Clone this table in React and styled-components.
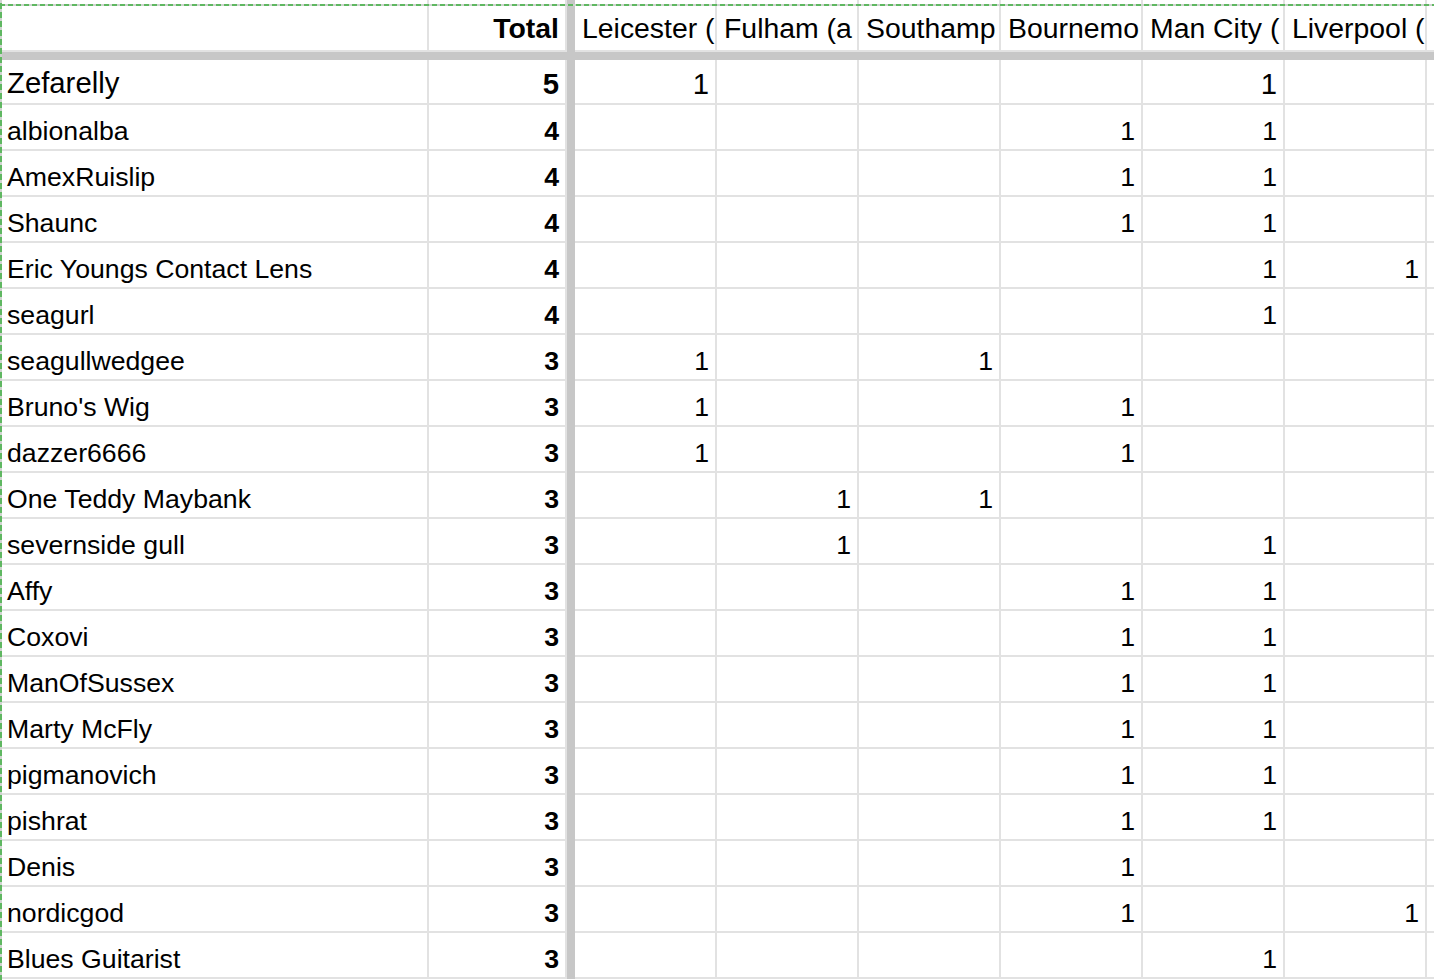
import React from "react";
import styled, { createGlobalStyle } from "styled-components";

// header labels as far as the narrow columns let them show
const teams = [
  "Leicester (",
  "Fulham (a",
  "Southamp",
  "Bournemo",
  "Man City (",
  "Liverpool (",
  "",
];

const rows = [
  { name: "Zefarelly", total: 5, picks: [0, 4] },
  { name: "albionalba", total: 4, picks: [3, 4] },
  { name: "AmexRuislip", total: 4, picks: [3, 4] },
  { name: "Shaunc", total: 4, picks: [3, 4] },
  { name: "Eric Youngs Contact Lens", total: 4, picks: [4, 5] },
  { name: "seagurl", total: 4, picks: [4] },
  { name: "seagullwedgee", total: 3, picks: [0, 2] },
  { name: "Bruno's Wig", total: 3, picks: [0, 3] },
  { name: "dazzer6666", total: 3, picks: [0, 3] },
  { name: "One Teddy Maybank", total: 3, picks: [1, 2] },
  { name: "severnside gull", total: 3, picks: [1, 4] },
  { name: "Affy", total: 3, picks: [3, 4] },
  { name: "Coxovi", total: 3, picks: [3, 4] },
  { name: "ManOfSussex", total: 3, picks: [3, 4] },
  { name: "Marty McFly", total: 3, picks: [3, 4] },
  { name: "pigmanovich", total: 3, picks: [3, 4] },
  { name: "pishrat", total: 3, picks: [3, 4] },
  { name: "Denis", total: 3, picks: [3] },
  { name: "nordicgod", total: 3, picks: [3, 5] },
  { name: "Blues Guitarist", total: 3, picks: [4] },
];

const GlobalStyle = createGlobalStyle`
  html, body {
    margin: 0;
    padding: 0;
    background: #ffffff;
  }
  body {
    font-family: "Liberation Sans", Arial, Helvetica, sans-serif;
    color: #000000;
  }
`;

const Page = styled.div`
  position: relative;
  width: 1434px;
  height: 980px;
  overflow: hidden;
  background: #ffffff;

  /* copy marquee (marching ants) */
  &::before {
    content: "";
    position: absolute;
    top: 4px;
    left: 0;
    right: 0;
    height: 2px;
    background: repeating-linear-gradient(
      90deg,
      #5fb761 0 5px,
      #cfd3cf 5px 8px
    );
    z-index: 2;
  }
  &::after {
    content: "";
    position: absolute;
    top: 0;
    bottom: 0;
    left: 0;
    width: 2px;
    background: repeating-linear-gradient(
      180deg,
      #cfd3cf 0 3px,
      #5fb761 3px 9px
    );
    z-index: 2;
  }
`;

const Sheet = styled.div`
  display: grid;
  grid-template-columns: 429px 138px 8px repeat(7, 142px);
  grid-template-rows: 52px 8px 45px repeat(19, 46px);
`;

const Cell = styled.div`
  display: flex;
  align-items: flex-end;
  justify-content: ${(p) => (p.$right ? "flex-end" : "flex-start")};
  padding: 0 ${(p) => (p.$right ? "6px" : "0")} ${(p) => p.$pb || "2px"}
    ${(p) => (p.$right ? "4px" : "7px")};
  border-right: 2px solid #e2e2e2;
  border-bottom: 2px solid #e2e2e2;
  font-size: ${(p) => p.$size || "26.67px"};
  font-weight: ${(p) => (p.$bold ? 700 : 400)};
  line-height: 1.15;
  white-space: nowrap;
  overflow: hidden;
  min-width: 0;
`;

const HeadCell = styled(Cell).attrs({ $size: "28.4px", $pb: "5px" })`
  padding-left: 7px;
`;

const FreezeColumn = styled.div`
  background: #c7c7c7;
`;

const FreezeRow = styled.div`
  grid-column: 1 / -1;
  background: #c7c7c7;
`;

export default function App() {
  return (
    <>
      <GlobalStyle />
      <Page>
        <Sheet>
          <HeadCell />
          <HeadCell $right $bold>
            Total
          </HeadCell>
          <FreezeColumn />
          {teams.map((t, i) => (
            <HeadCell key={i}>{t}</HeadCell>
          ))}

          <FreezeRow />

          {rows.map((r, ri) => {
            const size = ri === 0 ? "29.3px" : "26.67px";
            return (
              <React.Fragment key={r.name}>
                <Cell $size={size} $pb={ri === 0 ? "3px" : "2px"}>
                  {r.name}
                </Cell>
                <Cell $right $bold $size={size}>
                  {r.total}
                </Cell>
                <FreezeColumn />
                {teams.map((_, ci) => (
                  <Cell key={ci} $right $size={size}>
                    {r.picks.includes(ci) ? 1 : ""}
                  </Cell>
                ))}
              </React.Fragment>
            );
          })}
        </Sheet>
      </Page>
    </>
  );
}
